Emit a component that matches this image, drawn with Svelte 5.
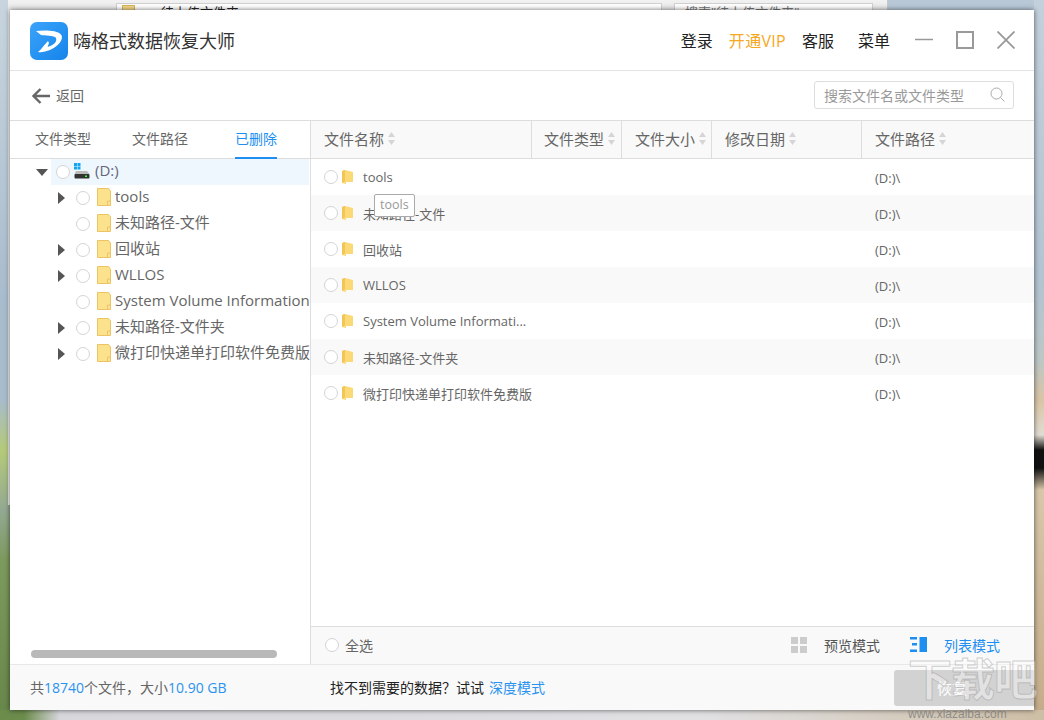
<script>
  const tree = [
    { name: "tools", arrow: true },
    { name: "未知路径-文件", arrow: false },
    { name: "回收站", arrow: true },
    { name: "WLLOS", arrow: true },
    { name: "System Volume Information", arrow: false },
    { name: "未知路径-文件夹", arrow: true },
    { name: "微打印快递单打印软件免费版", arrow: true },
  ];

  const rows = [
    "tools",
    "未知路径-文件",
    "回收站",
    "WLLOS",
    "System Volume Informati...",
    "未知路径-文件夹",
    "微打印快递单打印软件免费版",
  ];

  const columns = [
    { label: "文件名称", cls: "c-name" },
    { label: "文件类型", cls: "c-type" },
    { label: "文件大小", cls: "c-size" },
    { label: "修改日期", cls: "c-date" },
    { label: "文件路径", cls: "c-path" },
  ];
</script>

<div class="stage">
  <div class="desktop"></div>
  <div class="behind">
    <div class="addr"><span class="addr-folder"></span><span>待上传文件夹</span></div>
    <div class="addr-search">搜索"待上传文件夹"</div>
  </div>

  <div class="window">
    <header class="titlebar">
      <svg class="logo" viewBox="0 0 38 38" width="38" height="38">
        <defs>
          <linearGradient id="lg" x1="0" y1="0" x2="1" y2="1">
            <stop offset="0" stop-color="#3ba4fb" />
            <stop offset="1" stop-color="#1583ea" />
          </linearGradient>
        </defs>
        <rect width="38" height="38" rx="7" fill="url(#lg)" />
        <path d="M6 9C14 8 27 8 31 12.500C34.500 17 28 24.500 20 28C16 29.500 11 31 8 30C10.500 28 12 26 14 23.500L18 19L19 21L17.500 25C23 23.500 27.500 20 26 16C24.500 13 14 14 11 13Z" fill="#fff" />
      </svg>
      <h1>嗨格式数据恢复大师</h1>
      <nav>
        <span class="nav-item">登录</span>
        <span class="nav-item vip">开通VIP</span>
        <span class="nav-item">客服</span>
        <span class="nav-item menu">菜单</span>
      </nav>
      <div class="win-btns">
        <svg width="18" height="18" viewBox="0 0 18 18"><path d="M0 8.500H18" stroke="#999" stroke-width="1.500" /></svg>
        <svg width="18" height="18" viewBox="0 0 18 18"><rect x="1" y="1" width="16" height="16" fill="none" stroke="#999" stroke-width="2" /></svg>
        <svg width="18" height="18" viewBox="0 0 18 18"><path d="M0.500 0.500L17.500 17.500M17.500 0.500L0.500 17.500" stroke="#999" stroke-width="1.800" /></svg>
      </div>
    </header>

    <div class="backbar">
      <button class="back">
        <svg width="18" height="16" viewBox="0 0 18 16"><path d="M8.500 1L1.500 8L8.500 15M2 8H18" fill="none" stroke="#666" stroke-width="2.400" /></svg>
        <span>返回</span>
      </button>
      <div class="search">
        <span>搜索文件名或文件类型</span>
        <svg width="15" height="15" viewBox="0 0 15 15"><circle cx="6.500" cy="6.500" r="5.500" fill="none" stroke="#aaa" /><path d="M10.500 10.500L14.500 14.500" stroke="#aaa" /></svg>
      </div>
    </div>

    <div class="main">
      <aside class="left">
        <div class="tabs">
          <span class="tab t1">文件类型</span>
          <span class="tab t2">文件路径</span>
          <span class="tab t3 active">已删除</span>
        </div>
        <div class="tree">
          <div class="tree-root">
            <span class="tri-down"></span>
            <span class="radio"></span>
            <svg class="drive" width="16" height="16" viewBox="0 0 16 16">
              <path d="M0 0h3v3H0zM3.500 0h3v3H3.500zM0 3.500h3v3H0zM3.500 3.500h3v3H3.500z" fill="#12a5f4" />
              <path d="M2 8L13 8L15.500 11H.5Z" fill="#bbb" />
              <rect x=".5" y="11" width="15" height="4.500" rx="1" fill="#333" />
              <rect x="11" y="12.500" width="2" height="1.500" fill="#3f3" />
            </svg>
            <span class="root-label">(D:)</span>
          </div>
          {#each tree as item}
            <div class="tree-row">
              <span class="tri-slot">{#if item.arrow}<span class="tri-right"></span>{/if}</span>
              <span class="radio"></span>
              <svg class="folder-big" width="14" height="18" viewBox="0 0 14 18">
                <path d="M.5.500H11.500L13.500 3V17.500H.5Z" fill="#fde28e" stroke="#ecc463" />
                <path d="M10.500 17.500V13H13.500" fill="none" stroke="#ecc463" />
              </svg>
              <span class="tree-name">{item.name}</span>
            </div>
          {/each}
        </div>
        <div class="hscroll"><div class="thumb"></div></div>
      </aside>

      <section class="right">
        <div class="thead">
          {#each columns as col}
            <div class="th {col.cls}">
              <span>{col.label}</span>
              <svg class="sort" width="7" height="13" viewBox="0 0 7 13"><path d="M3.500 0L7 5H0ZM3.500 13L0 8H7Z" fill="#d5d5d5" /></svg>
            </div>
          {/each}
        </div>
        <div class="tbody">
          {#each rows as row, i}
            <div class="tr" class:alt={i % 2 === 1}>
              <span class="radio"></span>
              <svg class="folder-small" width="12" height="14" viewBox="0 0 12 14">
                <path d="M0 1L3 0L11 2V12L4 12L4 14L0 13Z" fill="#fbd976" />
                <path d="M0 1L3 0V11L0 13Z" fill="#f2c555" />
              </svg>
              <span class="tr-name">{row}</span>
              <span class="tr-path">(D:)\</span>
            </div>
          {/each}
          <div class="tip">tools</div>
        </div>
        <div class="tfoot">
          <span class="radio"></span>
          <span class="all">全选</span>
          <svg class="grid-ic" width="16" height="16" viewBox="0 0 16 16"><path d="M0 0h7v7H0zM9 0h7v7H9zM0 9h7v7H0zM9 9h7v7H9z" fill="#ccc" /></svg>
          <span class="mode">预览模式</span>
          <svg class="list-ic" width="17" height="15" viewBox="0 0 17 15"><path d="M0 0h7v2.500H0zM2 6h5v2.500H2zM0 12.500h7V15H0zM9.500 0H17v15H9.500z" fill="#1e8ff0" /></svg>
          <span class="mode on">列表模式</span>
        </div>
      </section>
    </div>

    <footer class="status">
      <span class="stats">共<b>18740</b>个文件，大小<b>10.90 GB</b></span>
      <span class="hint">找不到需要的数据？试试<a href="#deep">深度模式</a></span>
      <button class="restore">恢复</button>
    </footer>
  </div>

  <div class="mark">
    <span class="mark-big">下载吧</span>
    <span class="mark-url">www.xiazaiba.com</span>
  </div>
</div>

<style>
  :global(body) {
    margin: 0;
    overflow: hidden;
  }

  .stage {
    position: relative;
    width: 1044px;
    height: 720px;
    box-sizing: border-box;
    padding: 10px;
    overflow: hidden;
    font-family: "Open Sans", "Noto Sans CJK SC", sans-serif;
  }

  .desktop {
    position: absolute;
    inset: 0;
    background:
      linear-gradient(90deg, rgba(108, 140, 76, 1) 0, rgba(108, 140, 76, 1) 24px, rgba(215, 215, 220, 1) 60px, rgba(225, 225, 228, 1) 700px, rgba(205, 190, 165, 1) 1044px) 0 710px / 100% 10px no-repeat,
      linear-gradient(180deg, #c3d1dc 0, #b3c4d2 280px, #bcc7c6 360px, #d9c5a6 400px, #e0dcd2 435px, #111 450px, #111 468px, #d8c7aa 490px, #c5ad8c 710px) 1034px 0 / 10px 100% no-repeat,
      linear-gradient(180deg, #c8d5de 0, #a9bccd 300px, #a8bccb 400px, #b5ca7a 450px, #93a992 510px, #7d9a5e 560px, #67864a 720px) 0 0 / 10px 100% no-repeat,
      #b8c8d6;
  }

  .behind {
    position: absolute;
    left: 8px;
    top: 0;
    width: 879px;
    height: 505px;
    background: linear-gradient(180deg, #f2f2f2, #e6e6e6 10px, #f2f2f2 11px);
    border-right: 1px solid #c8c8c8;
  }

  .addr,
  .addr-search {
    position: absolute;
    top: 3px;
    height: 24px;
    box-sizing: border-box;
    background: #fff;
    border: 1px solid #d0d0d0;
    font-size: 13px;
    line-height: 17px;
    color: #222;
  }

  .addr {
    left: 108px;
    width: 546px;
    display: flex;
    gap: 26px;
    padding-left: 5px;
  }

  .addr-folder {
    width: 11px;
    height: 14px;
    margin-top: 1px;
    background: #f3d98a;
    border: 1px solid #d9b45c;
  }

  .addr-search {
    left: 666px;
    width: 199px;
    padding-left: 10px;
    color: #777;
  }

  .window {
    position: relative;
    width: 1024px;
    height: 700px;
    display: flex;
    flex-direction: column;
    background: #fff;
    box-shadow: 0 0 5px rgba(0, 0, 0, 0.6);
    color: #666;
  }

  .titlebar {
    height: 61px;
    flex: none;
    box-sizing: border-box;
    display: flex;
    align-items: center;
    padding: 2px 19px 0 20px;
    border-bottom: 1px solid #e4e4e4;
  }

  .logo {
    flex: none;
  }

  h1 {
    margin: 0 0 0 5px;
    font-size: 18px;
    font-weight: 400;
    line-height: 24px;
    color: #333;
  }

  nav {
    margin-left: auto;
    display: flex;
    font-size: 16px;
    line-height: 22px;
    color: #222;
  }

  .nav-item {
    margin-left: 16px;
  }

  .nav-item.vip {
    color: #f7a823;
    letter-spacing: 0.3px;
  }

  .nav-item.menu {
    margin-left: 24px;
  }

  .win-btns {
    display: flex;
    gap: 23px;
    margin-left: 25px;
    margin-top: -2px;
  }

  .backbar {
    height: 50px;
    flex: none;
    box-sizing: border-box;
    display: flex;
    align-items: center;
    justify-content: space-between;
    padding: 0 20px 0 22px;
    border-bottom: 1px solid #ddd;
  }

  .back {
    display: flex;
    align-items: center;
    gap: 6px;
    padding: 0;
    border: 0;
    background: none;
    font: inherit;
    font-size: 14px;
    line-height: 20px;
    color: #666;
  }

  .search {
    width: 200px;
    height: 28px;
    margin-top: -2px;
    box-sizing: border-box;
    display: flex;
    align-items: center;
    justify-content: space-between;
    padding: 0 8px 0 9px;
    border: 1px solid #ddd;
    border-radius: 3px;
    font-size: 14px;
    color: #999;
  }

  .main {
    flex: 1;
    min-height: 0;
    display: flex;
  }

  .left {
    width: 300px;
    flex: none;
    display: flex;
    flex-direction: column;
    min-width: 0;
    border-right: 1px solid #ddd;
    box-sizing: content-box;
  }

  .tabs {
    height: 38px;
    flex: none;
    box-sizing: border-box;
    display: flex;
    border-bottom: 1px solid #ddd;
    font-size: 14px;
    line-height: 36px;
  }

  .tab {
    height: 38px;
    box-sizing: border-box;
  }

  .t1 {
    margin-left: 25px;
  }

  .t2 {
    margin-left: 41px;
  }

  .t3 {
    margin-left: 47px;
  }

  .tab.active {
    color: #1e8ff0;
    border-bottom: 2px solid #1e8ff0;
  }

  .tree {
    flex: 1;
    min-height: 0;
    overflow: hidden;
    font-size: 15px;
    color: #666;
  }

  .tree-root {
    height: 26px;
    display: flex;
    align-items: center;
    margin-left: 41px;
    margin-right: 1px;
    background: #eef6fe;
    position: relative;
    white-space: nowrap;
  }

  .tri-down {
    position: absolute;
    left: -15px;
    top: 10px;
    border-left: 6px solid transparent;
    border-right: 6px solid transparent;
    border-top: 7px solid #555;
  }

  .tree-root .radio {
    margin-left: 5px;
  }

  .drive {
    margin-left: 4px;
    margin-top: -2px;
  }

  .root-label {
    margin-left: 5px;
    margin-top: -5px;
    line-height: 20px;
    color: #667;
  }

  .tree-row {
    height: 26px;
    display: flex;
    align-items: center;
    white-space: nowrap;
    padding-left: 48px;
  }

  .tri-slot {
    width: 18px;
    flex: none;
  }

  .tri-right {
    display: block;
    border-top: 6px solid transparent;
    border-bottom: 6px solid transparent;
    border-left: 7px solid #555;
    width: 0;
  }

  .folder-big {
    flex: none;
    margin-left: 7px;
    margin-top: -2px;
  }

  .tree-name {
    margin-left: 4px;
    margin-top: -5px;
    line-height: 20px;
  }

  .radio {
    width: 14px;
    height: 14px;
    flex: none;
    box-sizing: border-box;
    border: 1px solid #d4d4d4;
    border-radius: 50%;
    background: #fff;
  }

  .hscroll {
    height: 11px;
    flex: none;
    padding: 0 33px 3px 21px;
  }

  .thumb {
    height: 8px;
    border-radius: 4px;
    background: #b9b9b9;
  }

  .right {
    flex: 1;
    min-width: 0;
    display: flex;
    flex-direction: column;
  }

  .thead {
    height: 38px;
    flex: none;
    box-sizing: border-box;
    display: flex;
    background: #f9f9f9;
    border-bottom: 1px solid #ddd;
    font-size: 15px;
    color: #666;
  }

  .th {
    display: flex;
    align-items: center;
    gap: 4px;
    box-sizing: border-box;
    border-right: 1px solid #ddd;
    padding-left: 13px;
    padding-bottom: 3px;
  }

  .c-name {
    width: 221px;
  }

  .c-type,
  .c-size {
    width: 90px;
  }

  .c-type {
    padding-left: 12px;
  }

  .c-date {
    width: 150px;
  }

  .c-path {
    flex: 1;
    border-right: 0;
  }

  .tbody {
    flex: 1;
    min-height: 0;
    position: relative;
  }

  .tr {
    height: 36px;
    display: flex;
    align-items: center;
    padding-left: 13px;
    font-size: 13px;
    color: #666;
    white-space: nowrap;
  }

  .tr.alt {
    background: #f9f9f9;
  }

  .folder-small {
    margin-left: 4px;
    flex: none;
  }

  .tr-name {
    margin-left: 9px;
    width: 512px;
    flex: none;
  }

  .tr-path {
    margin-top: 2px;
  }

  .tip {
    position: absolute;
    left: 63px;
    top: 35px;
    height: 23px;
    box-sizing: border-box;
    padding: 0 5px;
    background: #fff;
    border: 1px solid #aaa;
    border-radius: 2px;
    font-size: 12.500px;
    line-height: 20px;
    color: #999;
  }

  .tfoot {
    height: 38px;
    flex: none;
    box-sizing: border-box;
    display: flex;
    align-items: center;
    padding: 0 0 2px 14px;
    background: #f9f9f9;
    border-top: 1px solid #ddd;
    font-size: 14px;
  }

  .all {
    margin-left: 6px;
    margin-top: 2px;
    line-height: 20px;
  }

  .grid-ic {
    margin-left: 418px;
  }

  .mode {
    margin-left: 17px;
    color: #555;
  }

  .list-ic {
    margin-left: 30px;
  }

  .mode.on {
    margin-left: 17px;
    color: #1e8ff0;
  }

  .status {
    height: 46px;
    flex: none;
    box-sizing: border-box;
    display: flex;
    align-items: center;
    padding: 0 0 2px 20px;
    background: #f9f9f9;
    border-top: 1px solid #e8e8e8;
    font-size: 14px;
    position: relative;
  }

  .stats b {
    font-weight: 400;
    color: #2a93f0;
  }

  .hint {
    position: absolute;
    left: 320px;
    color: #222;
  }

  .hint a {
    margin-left: 5px;
    color: #2a93f0;
    text-decoration: none;
  }

  .restore {
    margin-left: auto;
    width: 140px;
    height: 36px;
    margin-top: 2px;
    padding: 0 24px 0 0;
    border: 0;
    border-radius: 3px 0 0 3px;
    background: #d2d2d2;
    color: #fff;
    font: inherit;
    font-size: 15px;
  }

  .mark {
    position: absolute;
    left: 908px;
    top: 651px;
    width: 136px;
    display: flex;
    flex-direction: column;
    pointer-events: none;
    white-space: nowrap;
  }

  .mark-big {
    font-size: 44px;
    line-height: 57px;
    font-weight: 700;
    letter-spacing: -1px;
    color: rgba(255, 255, 255, 0.4);
    -webkit-text-stroke: 1px rgba(150, 150, 150, 0.45);
  }

  .mark-url {
    font-family: "Liberation Sans", sans-serif;
    font-size: 12px;
    line-height: 12px;
    color: rgba(120, 120, 120, 0.75);
  }
</style>
